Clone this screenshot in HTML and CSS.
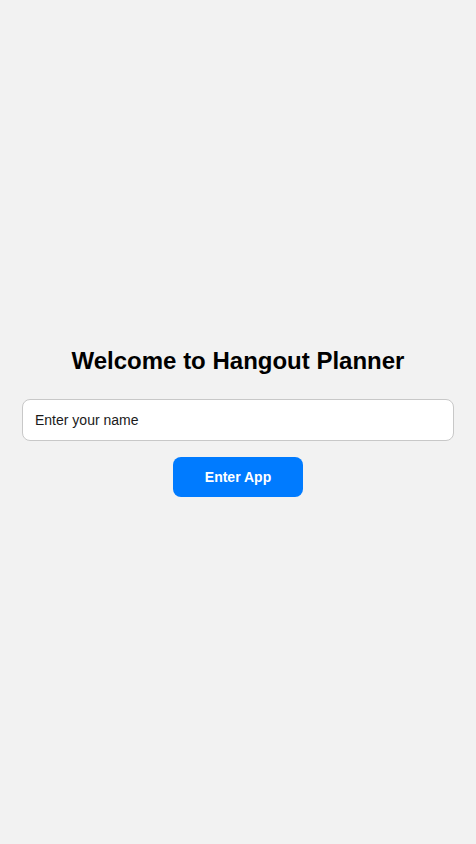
FILE: index.html
```html
<!DOCTYPE html>
<html lang="en">
<head>
<meta charset="utf-8">
<meta name="viewport" content="width=device-width, initial-scale=1">
<title>Hangout Planner</title>
<link rel="stylesheet" href="styles.css">
</head>
<body>
<main class="login">
  <h1 class="login-title">Welcome to Hangout Planner</h1>
  <input class="login-input" type="text" placeholder="Enter your name">
  <button class="login-button" type="button">Enter App</button>
</main>
</body>
</html>
```
FILE: styles.css
```css
html, body {
  margin: 0;
  padding: 0;
  height: 100%;
}
body {
  background: #f2f2f2;
  font-family: "Liberation Sans", Arial, sans-serif;
  color: #000;
}
.login {
  min-height: 100vh;
  box-sizing: border-box;
  padding: 0 22px 1px;
  display: flex;
  flex-direction: column;
  align-items: center;
  justify-content: center;
}
.login-title {
  margin: 0 0 24px;
  font-size: 24px;
  line-height: 28px;
  font-weight: bold;
  text-align: center;
}
.login-input {
  width: 100%;
  box-sizing: border-box;
  height: 42px;
  padding: 0 12px;
  border: 1px solid #c8c8c8;
  border-radius: 8px;
  background: #fff;
  font-family: inherit;
  font-size: 14px;
  color: #000;
  outline: none;
}
.login-input::placeholder {
  color: #1a1a1a;
  opacity: 1;
}
.login-button {
  margin-top: 16px;
  width: 130px;
  height: 40px;
  border: none;
  border-radius: 8px;
  background: #007bff;
  color: #fff;
  font-family: inherit;
  font-size: 14px;
  font-weight: bold;
  cursor: pointer;
}
```
